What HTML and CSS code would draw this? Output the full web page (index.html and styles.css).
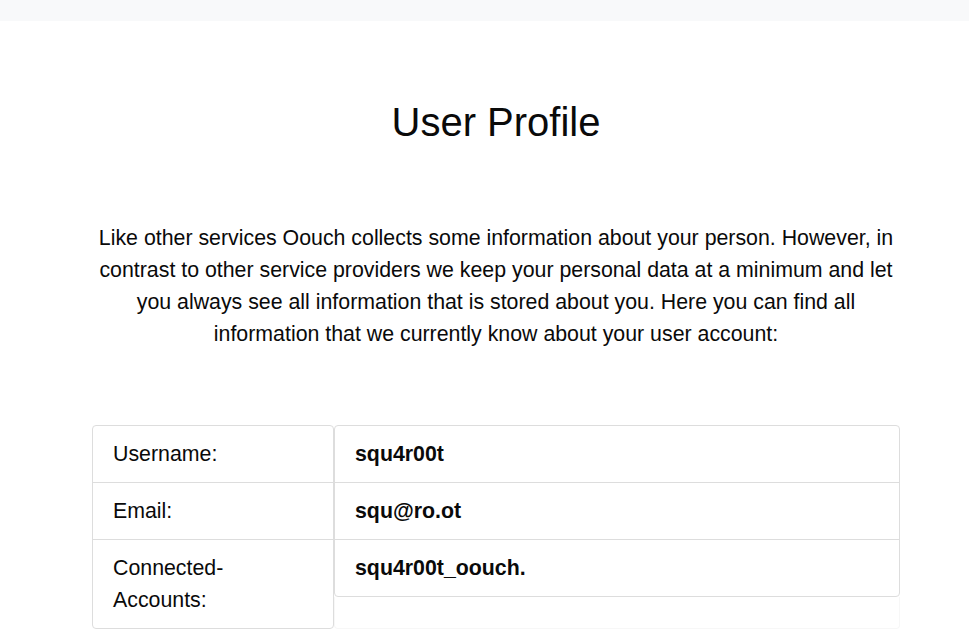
FILE: index.html
```html
<!DOCTYPE html>
<html lang="en">
<head>
    <meta charset="UTF-8">
    <meta name="viewport" content="width=device-width, initial-scale=1.0">
    <title>User Profile</title>
    <link rel="stylesheet" href="styles.css">
</head>
<body>
    <div class="topbar"></div>

    <div class="content">
        <h1>User Profile</h1>
        <p class="intro">Like other services Oouch collects some information about your person. However, in contrast to other service providers we keep your personal data at a minimum and let you always see all information that is stored about you. Here you can find all information that we currently know about your user account:</p>

        <div class="profile">
            <ul class="list labels">
                <li>Username:</li>
                <li>Email:</li>
                <li>Connected-<br>Accounts:</li>
            </ul>
            <div class="values-col">
                <ul class="list values">
                    <li>squ4r00t</li>
                    <li>squ@ro.ot</li>
                    <li>squ4r00t_oouch.</li>
                </ul>
                <div class="ghost"></div>
            </div>
        </div>
    </div>
</body>
</html>
```

FILE: styles.css
```css
body {
    font-family: "Liberation Sans", Arial, sans-serif;
    margin: 0;
    padding: 0;
    background: #fff;
    color: #0a0a0a;
}

.topbar {
    height: 21px;
    background: #f8f9fa;
}

.content {
    width: 808px;
    margin-left: 92px;
}

h1 {
    margin: 77px 0 0;
    font-size: 40px;
    font-weight: 400;
    line-height: 48px;
    text-align: center;
}

.intro {
    margin: 76px 0 0;
    font-size: 21.33px;
    line-height: 32px;
    text-align: center;
}

.profile {
    display: flex;
    margin-top: 75px;
}

.list {
    list-style: none;
    margin: 0;
    padding: 0;
    border: 1px solid #ddd;
    border-radius: 4px;
}

.list li {
    padding: 12px 20px;
    font-size: 21.33px;
    line-height: 32px;
}

.list li + li {
    border-top: 1px solid #ddd;
}

.labels {
    width: 240px;
}

.values-col {
    flex: 1;
}

.values {
    font-weight: 700;
}

.ghost {
    height: 31px;
    border: 1px solid #f7f7f7;
    border-top: none;
    border-radius: 0 0 4px 4px;
}
```
